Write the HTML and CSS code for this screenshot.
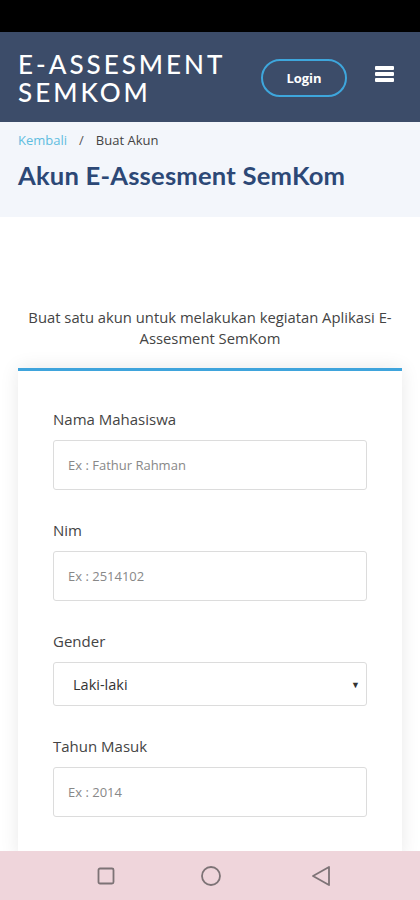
FILE: index.html
```html
<!DOCTYPE html>
<html lang="id">
<head>
<meta charset="utf-8">
<meta name="viewport" content="width=device-width, initial-scale=1">
<title>Buat Akun</title>
<link rel="stylesheet" href="styles.css">
</head>
<body>
<div class="status-bar"></div>
<header class="header">
  <div class="brand"><div class="brand-line">E-ASSESMENT</div><div class="brand-line">SEMKOM</div></div>
  <a class="login-btn" href="#">Login</a>
  <div class="burger"><span></span><span></span><span></span></div>
</header>
<section class="crumbs">
  <div class="crumb-line"><a class="crumb-link" href="#">Kembali</a><span class="sep">/</span><span class="crumb-current">Buat Akun</span></div>
  <h1 class="page-title">Akun E-Assesment SemKom</h1>
</section>
<main class="main">
  <p class="intro">Buat satu akun untuk melakukan kegiatan Aplikasi E-Assesment SemKom</p>
  <form class="card">
    <div class="field">
      <label class="label">Nama Mahasiswa</label>
      <input class="input" type="text" placeholder="Ex : Fathur Rahman">
    </div>
    <div class="field">
      <label class="label">Nim</label>
      <input class="input" type="text" placeholder="Ex : 2514102">
    </div>
    <div class="field">
      <label class="label">Gender</label>
      <div class="select"><span>Laki-laki</span><span class="arrow">▼</span></div>
    </div>
    <div class="field">
      <label class="label">Tahun Masuk</label>
      <input class="input" type="text" placeholder="Ex : 2014">
    </div>
  </form>
</main>
<nav class="navbar">
  <svg width="18" height="18" viewBox="0 0 18 18"><rect x="1.5" y="1.5" width="15" height="15" rx="1.5" fill="none" stroke="#7d7376" stroke-width="1.8"/></svg>
  <svg class="nav-circle" width="22" height="22" viewBox="0 0 22 22"><circle cx="11" cy="11" r="9" fill="none" stroke="#7d7376" stroke-width="1.8"/></svg>
  <svg width="20" height="22" viewBox="0 0 20 22"><path d="M18 2 L2 11 L18 20 Z" fill="none" stroke="#7d7376" stroke-width="1.8" stroke-linejoin="round"/></svg>
</nav>
</body>
</html>
```
FILE: styles.css
```css
* { box-sizing: border-box; }
html, body { margin: 0; padding: 0; }
body {
  width: 420px;
  height: 900px;
  overflow: hidden;
  font-family: "Open Sans", "Noto Sans", sans-serif;
  background: #fff;
  position: relative;
}
.status-bar { height: 32px; background: #000; }
.header {
  height: 90px;
  background: #3c4c69;
  display: flex;
  align-items: center;
  padding: 0 26px 0 18px;
}
.brand {
  color: #fff;
  font-family: "Lato", sans-serif;
  font-weight: 500;
  font-size: 26px;
  letter-spacing: 3px;
  flex: 1;
  margin-top: 1px;
  display: flex;
  flex-direction: column;
}
.brand-line { height: 28px; line-height: 28px; overflow: visible; }
.login-btn {
  width: 86px;
  height: 38px;
  border: 2px solid #3ea6dc;
  border-radius: 20px;
  color: #fff;
  font-family: "Open Sans", sans-serif;
  font-weight: 700;
  font-size: 13px;
  text-decoration: none;
  display: flex;
  align-items: center;
  justify-content: center;
  margin-right: 28px;
  margin-top: 2px;
}
.burger {
  width: 19px;
  display: flex;
  flex-direction: column;
  gap: 2px;
  margin-top: -6px;
}
.burger span { height: 4px; background: #fff; border-radius: 1px; }
.crumbs {
  background: #f3f6fb;
  height: 95px;
  padding: 9px 18px 0;
}
.crumb-line { font-size: 13px; color: #444; display: flex; align-items: center; }
.crumb-link { color: #5fbde0; text-decoration: none; }
.sep { margin: 0 12px; color: #555; }
.page-title {
  margin: 11px 0 0;
  font-family: "Lato", sans-serif;
  font-weight: 700;
  font-size: 25.6px;
  color: #2c4876;
  letter-spacing: 0.2px;
}
.main { padding: 90px 18px 0; }
.intro {
  margin: 0 4px;
  text-align: center;
  font-size: 14.8px;
  line-height: 21px;
  color: #444;
}
.card {
  margin-top: 19px;
  border-top: 3px solid #3fa4dc;
  background: #fff;
  box-shadow: 0 0 18px rgba(0,0,0,0.09);
  padding: 38px 35px 40px;
  display: flex;
  flex-direction: column;
  gap: 30px;
}
.field { display: flex; flex-direction: column; }
.label { font-size: 15px; color: #444; margin-bottom: 11px; line-height: 20px; }
.input {
  height: 50px;
  border: 1px solid #dcdcdc;
  border-radius: 3px;
  padding: 0 14px;
  font-family: "Open Sans", sans-serif;
  font-size: 13px;
  color: #444;
  outline: none;
}
.input::placeholder { color: #888; }
.select {
  height: 44px;
  border: 1px solid #dcdcdc;
  border-radius: 3px;
  padding: 0 6px 0 19px;
  display: flex;
  align-items: center;
  justify-content: space-between;
  font-size: 14.5px;
  color: #333;
}
.arrow { font-size: 9px; color: #333; }
.navbar {
  position: absolute;
  left: 0;
  bottom: 0;
  width: 420px;
  height: 49px;
  background: #efd5db;
  display: flex;
  align-items: center;
  justify-content: space-between;
  padding: 0 89px 0 97px;
}
.nav-circle { margin-right: 4px; }
```
